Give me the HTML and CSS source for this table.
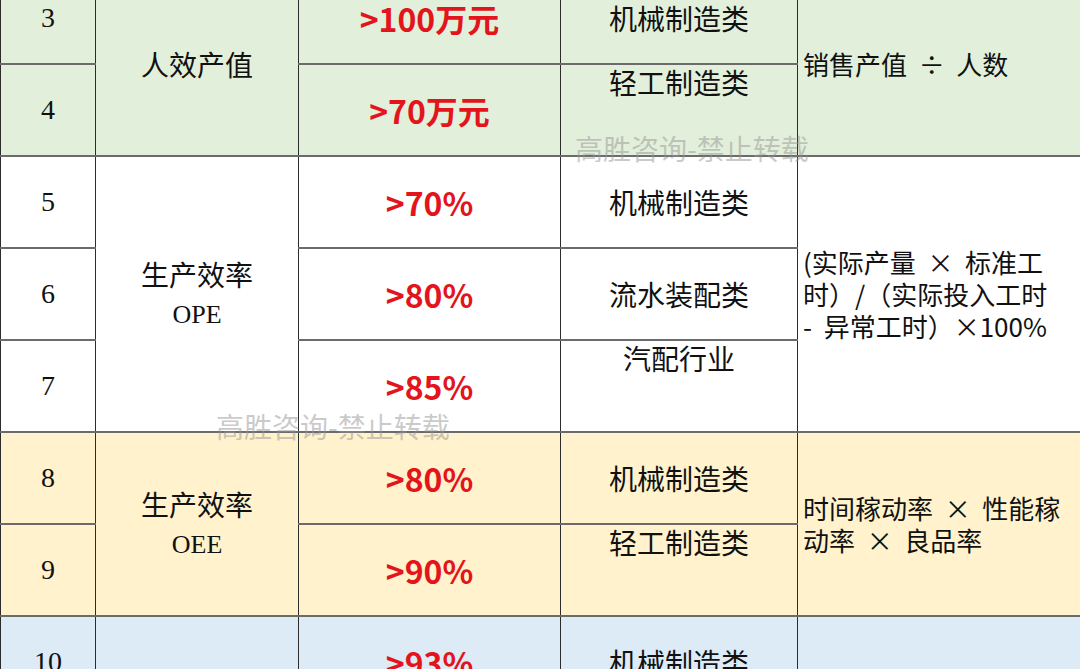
FILE: index.html
```html
<!DOCTYPE html>
<html lang="zh-CN">
<head>
<meta charset="utf-8">
<title>效率指标</title>
<link rel="stylesheet" href="styles.css">
</head>
<body>
<div class="sheet">
  <table class="grid">
    <colgroup>
      <col class="c-no">
      <col class="c-name">
      <col class="c-target">
      <col class="c-type">
      <col class="c-formula">
    </colgroup>
    <tbody>
      <tr class="green">
        <td class="no">3</td>
        <td class="name" rowspan="2">人效产值</td>
        <td class="target">&gt;100万元</td>
        <td class="type">机械制造类</td>
        <td class="formula" rowspan="2">销售产值&nbsp; ÷ &nbsp;人数</td>
      </tr>
      <tr class="green">
        <td class="no">4</td>
        <td class="target">&gt;70万元</td>
        <td class="type top">轻工制造类</td>
      </tr>
      <tr class="white">
        <td class="no">5</td>
        <td class="name two" rowspan="3">生产效率<br><span class="latin">OPE</span></td>
        <td class="target">&gt;70%</td>
        <td class="type">机械制造类</td>
        <td class="formula" rowspan="3">(实际产量&nbsp; × &nbsp;标准工<br>时）/（实际投入工时<br>-&nbsp; 异常工时）×100%</td>
      </tr>
      <tr class="white">
        <td class="no">6</td>
        <td class="target">&gt;80%</td>
        <td class="type">流水装配类</td>
      </tr>
      <tr class="white">
        <td class="no">7</td>
        <td class="target">&gt;85%</td>
        <td class="type top">汽配行业</td>
      </tr>
      <tr class="yellow">
        <td class="no">8</td>
        <td class="name two" rowspan="2">生产效率<br><span class="latin">OEE</span></td>
        <td class="target">&gt;80%</td>
        <td class="type">机械制造类</td>
        <td class="formula" rowspan="2">时间稼动率&nbsp; × &nbsp;性能稼<br>动率&nbsp; × &nbsp;良品率</td>
      </tr>
      <tr class="yellow">
        <td class="no">9</td>
        <td class="target">&gt;90%</td>
        <td class="type top">轻工制造类</td>
      </tr>
      <tr class="blue">
        <td class="no">10</td>
        <td class="name"></td>
        <td class="target">&gt;93%</td>
        <td class="type">机械制造类</td>
        <td class="formula"></td>
      </tr>
    </tbody>
  </table>
</div>
<div class="watermark wm-1">高胜咨询-禁止转载</div>
<div class="watermark wm-2">高胜咨询-禁止转载</div>
</body>
</html>
```

FILE: styles.css
```css
html, body {
  margin: 0;
  padding: 0;
  background: #ffffff;
}

body {
  width: 1080px;
  height: 669px;
  overflow: hidden;
  position: relative;
  font-family: "Noto Sans CJK SC", "Noto Sans", sans-serif;
  color: #111111;
}

.sheet {
  margin-top: -29px;
}

.grid {
  border-collapse: collapse;
  table-layout: fixed;
  width: 1110px;
}

.c-no { width: 95px; }
.c-name { width: 203px; }
.c-target { width: 262px; }
.c-type { width: 237px; }
.c-formula { width: 313px; }

.grid tr {
  height: 92px;
}

.grid td {
  border-left: 1px solid #2c2c2c;
  border-right: 1px solid #2c2c2c;
  border-top: 2px solid #6b6b6b;
  border-bottom: 2px solid #6b6b6b;
  padding: 0;
  text-align: center;
  vertical-align: middle;
  font-size: 28px;
  line-height: 36px;
}

.green td { background: #e2efda; }
.white td { background: #ffffff; }
.yellow td { background: #fff2cc; }
.blue td { background: #ddebf7; }

.grid td.no {
  font-family: "Liberation Serif", "Times New Roman", serif;
  font-size: 28px;
}

.latin {
  font-family: "Liberation Serif", "Times New Roman", serif;
  font-size: 26px;
}

.grid td.two {
  line-height: 37px;
}

.grid td.target {
  color: #e3141c;
  font-weight: 700;
  font-size: 32px;
}

.grid td.top {
  vertical-align: top;
  padding-top: 0;
  line-height: 34px;
}

.grid td.formula {
  text-align: left;
  padding-left: 5px;
  font-size: 26px;
  line-height: 32px;
  white-space: nowrap;
}

.watermark {
  position: absolute;
  font-size: 28px;
  line-height: 32px;
  color: rgba(150, 150, 150, 0.5);
  white-space: nowrap;
  pointer-events: none;
}

.wm-1 {
  left: 575px;
  top: 132px;
}

.wm-2 {
  left: 216px;
  top: 410px;
}
```
